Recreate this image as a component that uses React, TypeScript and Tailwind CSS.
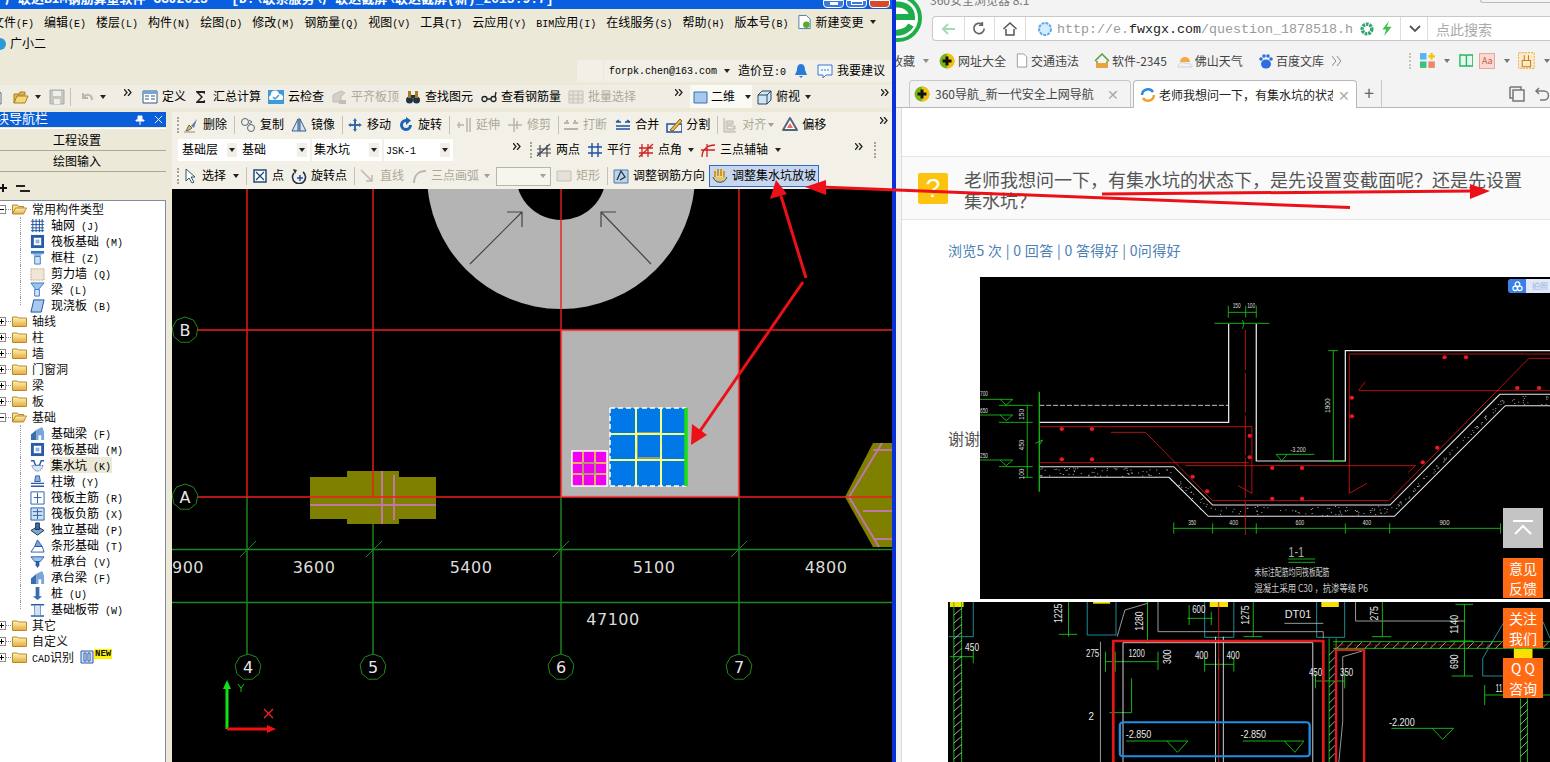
import React from 'react';

const Lat = ({ children }: { children: React.ReactNode }) => <span className="text-[10px]">{children}</span>;

const Caret = ({ cls = '' }: { cls?: string }) => (
  <svg viewBox="0 0 6 4" className={`w-[6px] h-[4px] shrink-0 ${cls}`}><path d="M0 0h6L3 4z" fill="#222" /></svg>
);
const More = ({ cls = '' }: { cls?: string }) => (
  <svg viewBox="0 0 8 7" className={`w-[8px] h-[7px] shrink-0 ${cls}`}><path d="M0 0l3 3.5L0 7M4 0l3 3.5L4 7" fill="none" stroke="#222" strokeWidth="1.3" /></svg>
);
const Sep = ({ cls = '' }: { cls?: string }) => <div className={`w-px h-[18px] bg-[#c5c2b8] shrink-0 ${cls}`} />;
const Grip = ({ cls = '' }: { cls?: string }) => <div className={`w-[2px] h-[16px] border-l-2 border-dotted border-[#a8a598] shrink-0 ${cls}`} />;

const icons: Record<string, React.ReactNode> = {
  file: <path d="M3 1h7l3 3v11H3z" fill="#fff" stroke="#667" />,
  open: <><path d="M1 5h5l1-2h5v3H5L1 14z" fill="#e9b949" stroke="#a97f1d" /><path d="M4 7h11l-3 7H1z" fill="#f6d77c" stroke="#a97f1d" /></>,
  save: <><path d="M1 1h14v14H1z" fill="#c9c7bd" stroke="#aaa" /><path d="M4 2h8v5H4zM5 10h6v5H5z" fill="#eee" /></>,
  undo: <path d="M4 4v5h5M4 9c3-5 9-4 9 2" fill="none" stroke="#b9b7ad" strokeWidth="2" />,
  def: <><path d="M1 2h14v12H1z" fill="#fff" stroke="#31568a" /><path d="M1 2h14v3H1z" fill="#7ba2d4" /><path d="M3 7h4M3 10h4M9 7h4M9 10h4" stroke="#31568a" /></>,
  sum: <path d="M3 2h9v3l-2-1H6l4 4-4 4h4l2-1v3H3v-1l5-5-5-5z" fill="#222" />,
  cloud: <><path d="M0 1h16v14H0z" fill="#3e9ad8" /><path d="M2 11a3 3 0 0 1 1-5 4 4 0 0 1 8-1 3.500 3.500 0 0 1 3 6z" fill="#fff" /><path d="M5 8l2 2 4-4" fill="none" stroke="#3e9ad8" strokeWidth="1.500" /></>,
  level: <><path d="M2 13V6l8-4 4 2-4 3v6z" fill="#d3d1c7" stroke="#bbb" /><path d="M8 11h7v4H8z" fill="#c2c0b6" /></>,
  find: <><circle cx="4.500" cy="11" r="3.500" fill="#234" /><circle cx="11.500" cy="11" r="3.500" fill="#234" /><path d="M3 2h3v7H3zM10 2h3v7h-3z" fill="#a97f1d" /><path d="M6 6h4v3H6z" fill="#234" /></>,
  glasses: <path d="M1 10a2.500 2.500 0 1 0 5 0 2.500 2.500 0 1 0-5 0zM10 10a2.500 2.500 0 1 0 5 0 2.500 2.500 0 1 0-5 0zM6 10h4M14 8l1-5" fill="none" stroke="#222" strokeWidth="1.300" />,
  batch: <path d="M1 2h14v12H1zM1 6h14M1 10h14M5 2v12M10 2v12" fill="#e6e4da" stroke="#c4c2b8" />,
  two: <path d="M1 3h13v11H1z" fill="#a8c8ef" stroke="#3c6fb0" />,
  cube: <><path d="M2 6l4-4h9v9l-4 4H2z" fill="#cfe6f5" stroke="#345" /><path d="M2 6h9v9M11 6l4-4" fill="none" stroke="#345" /></>,
  del: <><path d="M3 14l3-6 3 3-3 2z" fill="#e9b949" stroke="#666" /><path d="M8 9l6-7-3 9z" fill="#6a7ea8" /><path d="M1 15h11" stroke="#888" /></>,
  copy: <><circle cx="5" cy="5" r="3.500" fill="none" stroke="#567" /><circle cx="11" cy="11" r="3.500" fill="none" stroke="#567" /><path d="M9 3l3 2-3 2" fill="none" stroke="#567" /></>,
  mirror: <path d="M7 2v12H1zM9 2v12h6zM8 1v14" fill="#d8e3ef" stroke="#345f8f" />,
  move: <path d="M8 1l2 3H9v3h3V6l3 2-3 2V9H9v3h1l-2 3-2-3h1V9H4v1L1 8l3-2v1h3V4H6z" fill="#356aa8" />,
  rotate: <path d="M8 2a6 6 0 1 0 6 6h-3a3 3 0 1 1-3-3v3l5-4.500L8 0z" fill="#1d63b5" />,
  extend: <path d="M1 8h7M3 5v6M11 1v14M14 1v14" fill="none" stroke="#b8b6ac" strokeWidth="1.500" />,
  trim: <path d="M1 8h14M7 1v14M10 4v8" fill="none" stroke="#b8b6ac" strokeWidth="1.500" />,
  brk: <path d="M1 6h5M10 6h5M1 12h14M4 3v3M12 3v3" fill="none" stroke="#b8b6ac" strokeWidth="2" />,
  merge: <path d="M1 5h5M1 5l3-2M15 5h-5M15 5l-3-2M1 12h14M1 9h14" fill="none" stroke="#1d4fa5" strokeWidth="1.500" />,
  split: <><path d="M1 7h15v8H1z" fill="none" stroke="#1d4fa5" strokeWidth="1.500" /><path d="M4 13L14 2l2 2L7 14z" fill="#e9b949" stroke="#8a5f1d" /></>,
  align: <path d="M2 1v14h12M5 4h6v3H5zM5 9h8v3H5z" fill="#dedcd2" stroke="#b8b6ac" />,
  offset: <><path d="M8 1l7 12H1z" fill="#fff" stroke="#567" strokeWidth="2" strokeLinejoin="round" /><path d="M8 6l3 5H5z" fill="#e66" /></>,
  twopt: <path d="M1 14L14 2M4 3v12M11 3v12M1 7h14M1 11h14" fill="none" stroke="#445" strokeWidth="1.200" />,
  para: <path d="M5 1v14M11 1v14M1 5h14M1 11h14" fill="none" stroke="#1d4fa5" strokeWidth="1.400" />,
  angle: <path d="M1 15L15 2M4 2v13M10 2v13M1 6h14M1 11h14" fill="none" stroke="#c22" strokeWidth="1.300" />,
  arcaxis: <path d="M2 15C2 7 8 3 15 3M1 8h14M7 2v13" fill="none" stroke="#c22" strokeWidth="1.300" />,
  select: <path d="M4 1v12l3-3 3 5 2-1-3-5h4z" fill="#fff" stroke="#356" />,
  point: <><path d="M2 2h12v12H2z" fill="#fff" stroke="#234a7a" strokeWidth="1.500" /><path d="M4 4l8 8M12 4l-8 8" stroke="#234a7a" strokeWidth="1.300" /></>,
  rotpt: <><path d="M3 5a6.500 6.500 0 1 0 9-1" fill="none" stroke="#234" strokeWidth="1.600" /><path d="M2 1l4 1-2 4z" fill="#234" /><path d="M9 7v6M6 10h6" stroke="#1d4fa5" strokeWidth="1.500" /></>,
  line: <path d="M1 2l11 11M12 7v6H6" fill="none" stroke="#bbb9af" strokeWidth="1.500" />,
  arc: <path d="M3 15C3 7 8 3 15 3" fill="none" stroke="#bbb9af" strokeWidth="2" />,
  rect: <path d="M1 3h14v10H1z" fill="#e3e1d8" stroke="#c4c2b8" />,
  adj: <><path d="M1 2h14v13H1z" fill="#bcd3ea" stroke="#4a78a8" /><path d="M4 12L8 3l4 6-5 3" fill="none" stroke="#234" strokeWidth="1.300" /></>,
  pit: <><path d="M3 9V3M6 8V1M9 8V1M12 9V3" stroke="#d49a17" strokeWidth="2" /><path d="M1 9c2 7 12 7 14 0" fill="#e8c65a" stroke="#1d4fa5" /></>,
  globe: <circle cx="8" cy="8" r="6" fill="#d4ecff" stroke="#5ea9e6" strokeWidth="2" strokeDasharray="3 1" />,
};

const Ico = ({ name, cls = 'w-4 h-4' }: { name: string; cls?: string }) => (
  <svg viewBox="0 0 16 16" className={`${cls} shrink-0`}>{icons[name]}</svg>
);

const Tool = ({ icon, label, off, cls = '' }: { icon: string; label: string; off?: boolean; cls?: string }) => (
  <div className={`flex items-center gap-1 shrink-0 ${off ? 'text-[#aca899]' : ''} ${cls}`}>
    <Ico name={icon} />
    <span className="relative top-px">{label}</span>
  </div>
);

const Combo = ({ label, cls }: { label: React.ReactNode; cls: string }) => (
  <div className={`flex items-center justify-between h-[22px] bg-white pr-[3px] shrink-0 ${cls}`}>
    <span className="relative top-px">{label}</span>
    <div className="w-[10px] h-[14px] bg-[#f1efe6] flex items-center justify-center"><Caret /></div>
  </div>
);

const menus: [React.ReactNode, string][] = [
  ['文件', '(F)'], ['编辑', '(E)'], ['楼层', '(L)'], ['构件', '(N)'], ['绘图', '(D)'], ['修改', '(M)'], ['钢筋量', '(Q)'],
  ['视图', '(V)'], ['工具', '(T)'], ['云应用', '(Y)'], [<><Lat>BIM</Lat>应用</>, '(I)'], ['在线服务', '(S)'], ['帮助', '(H)'], ['版本号', '(B)'],
];

const Folder = ({ open }: { open?: boolean }) => (
  <svg viewBox="0 0 15 12" className="w-[15px] h-[12px] shrink-0 ml-[1px]">
    <defs>
      <linearGradient id="fld" x1="0" y1="0" x2="0" y2="1"><stop offset="0" stopColor="#fff3b8" /><stop offset="1" stopColor="#e2ad3f" /></linearGradient>
    </defs>
    {open ? (
      <>
        <path d="M.5 11V2h5l1 1.500h5V5" fill="#f3dca0" stroke="#b78a2c" />
        <path d="M.5 11l3-6h11l-3 6z" fill="url(#fld)" stroke="#b78a2c" />
      </>
    ) : (
      <path d="M.5 2h5l1 1h8v8.500H.5z" fill="url(#fld)" stroke="#b78a2c" />
    )}
  </svg>
);

const Top = ({ label, open, extra }: { label: React.ReactNode; open?: boolean; extra?: React.ReactNode }) => (
  <div className="flex items-center h-4">
    <div className="w-[9px] h-[9px] -ml-[3px] border border-[#8a8a8a] bg-white flex items-center justify-center shrink-0 relative">
      <div className="w-[5px] h-px bg-black" />
      {!open && <div className="absolute w-px h-[5px] bg-black" />}
    </div>
    <div className="w-[5px] border-b border-dotted border-[#888]" />
    <Folder open={open} />
    <span className="ml-[5px] leading-4 text-[#111] relative top-[2px]">{label}</span>
    {extra}
  </div>
);

const tIcons: Record<string, React.ReactNode> = {
  grid: <path d="M3 1v14M6.500 1v14M10 1v14M13 1v14M1 3.500h14M1 7h14M1 10.500h14M1 13.500h14" stroke="#1f4f9a" />,
  raft: <><path d="M1 1h14v14H1z" fill="#2a5ba8" /><path d="M3.500 3.500h9v9h-9z" fill="#fff" stroke="#2a5ba8" /><path d="M6 6h4v4H6z" fill="#8fb1de" /></>,
  col: <><path d="M1 1h14v3H1z" fill="#3a77c4" /><path d="M3 4h10l-2 3H5z" fill="#8fb8e6" /><path d="M5 7h6v8H5z" fill="#cfe1f5" stroke="#3a77c4" /></>,
  wall: <path d="M1 3h14v12H1z" fill="#f1e6d6" stroke="#c9a37e" strokeDasharray="2 1" />,
  beam: <><path d="M1 1h14L9 8H6z" fill="#9cc4ec" stroke="#3a77c4" /><path d="M5 8h5v7H5z" fill="#d6e6f6" stroke="#3a77c4" /></>,
  slab: <><path d="M4 2h11l-3 13H1z" fill="#a8c8ef" stroke="#1f4f9a" /></>,
  fb: <><path d="M1 15V9l6-5v11z" fill="#3a6db0" /><path d="M7 4l6-3 2 5v9H7z" fill="#7aa5d8" /><path d="M9 15v-5h3v5z" fill="#fff" /></>,
  pit: <><path d="M1 3l3 0 2 5h4l2-5 3 0" fill="none" stroke="#2a5ba8" strokeWidth="1.500" /><path d="M2 8c2 8 10 8 12 0z" fill="#d8e4f0" stroke="#2a5ba8" strokeDasharray="1 1" /></>,
  cap: <><path d="M6 2h4l1 6H5z" fill="#8fb1de" stroke="#2a5ba8" /><path d="M1 10h14M1 13h14" stroke="#2a5ba8" strokeWidth="1.500" /></>,
  rebar: <><path d="M1 2h14v13H1z" fill="#fff" stroke="#2a5ba8" /><path d="M8 3v11M4 8h8" stroke="#2a5ba8" /></>,
  rebar2: <><path d="M1 2h14v13H1z" fill="#cfe1f5" stroke="#2a5ba8" /><path d="M8 3v11M3 6h10M3 10h10" stroke="#2a5ba8" /></>,
  ind: <><path d="M1 9l7-4 7 4-7 5z" fill="#7aa5d8" stroke="#234" /><path d="M6 1h4v7H6z" fill="#3a6db0" stroke="#234" /></>,
  strip: <><path d="M1 15l4-6h8l2 6z" fill="#fff" stroke="#2a5ba8" /><path d="M5 9l3-7 5 7z" fill="#7aa5d8" stroke="#2a5ba8" /></>,
  pile: <><path d="M1 3h14L11 8H5z" fill="#9cc4ec" stroke="#2a5ba8" /><path d="M6 8h4v4l-2 3-2-3z" fill="#2a5ba8" /></>,
  pile2: <><path d="M6 1h4v10h3l-5 4-5-4h3z" fill="#3a6db0" /></>,
  band: <><path d="M1 3h14M1 15h14" stroke="#2a5ba8" strokeWidth="1.500" /><path d="M5 4v10M11 4v10" stroke="#2a5ba8" /><path d="M5 5h6v9H5z" fill="#cfe1f5" /></>,
};

const Child = ({ icon, label, last, selected }: { icon: string; label: React.ReactNode; last?: boolean; selected?: boolean }) => (
  <div className="flex items-center h-4">
    <div className="w-[11px] h-4 ml-[20px] shrink-0">
      <div className={`${last ? 'h-2' : 'h-4'} w-px border-l border-dotted border-[#999]`} />
    </div>
    <svg viewBox="0 0 16 16" className="w-[15px] h-[15px] shrink-0 -ml-[1px] mt-px bg-white">{tIcons[icon]}</svg>
    <span className={`ml-[5px] leading-4 h-4 px-px ${selected ? 'bg-[#ece9d8]' : ''}`}><span className="relative top-[2px]">{label}</span></span>
  </div>
);

const sub1: [string, string, string][] = [
  ['grid', '轴网', '(J)'], ['raft', '筏板基础', '(M)'], ['col', '框柱', '(Z)'], ['wall', '剪力墙', '(Q)'], ['beam', '梁', '(L)'], ['slab', '现浇板', '(B)'],
];
const sub2: [string, string, string][] = [
  ['fb', '基础梁', '(F)'], ['raft', '筏板基础', '(M)'], ['pit', '集水坑', '(K)'], ['cap', '柱墩', '(Y)'], ['rebar', '筏板主筋', '(R)'], ['rebar2', '筏板负筋', '(X)'],
  ['ind', '独立基础', '(P)'], ['strip', '条形基础', '(T)'], ['pile', '桩承台', '(V)'], ['fb', '承台梁', '(F)'], ['pile2', '桩', '(U)'], ['band', '基础板带', '(W)'],
];

const Octagon = ({ x, y, t }: { x: number; y: number; t: string }) => {
  const pts = Array.from({ length: 9 }, (_, i) => {
    const a = (i * 2 * Math.PI) / 9 - Math.PI / 2;
    return `${x + 13 * Math.cos(a)},${y + 13 * Math.sin(a)}`;
  }).join(' ');
  return (
    <>
      <polygon points={pts} fill="#000" stroke="#1e8a1e" strokeWidth="1" />
      <text x={x} y={y + 6} textAnchor="middle" fill="#e6e6e6" fontSize="16" fontFamily="'DejaVu Sans',sans-serif">{t}</text>
    </>
  );
};

const Dim = ({ x, y, t }: { x: number; y: number; t: string }) => (
  <text x={x} y={y} textAnchor="middle" fill="#dcdcdc" fontSize="16" letterSpacing="0.5" fontFamily="'DejaVu Sans',sans-serif">{t}</text>
);

const Canvas = () => (
  <svg viewBox="172 189 720 573" className="w-[720px] h-[573px] block bg-black">
    <circle cx="561" cy="175" r="134" fill="#b4b4b4" />
    <circle cx="561" cy="175" r="45" fill="#000" />
    <path d="M470 264l52-52M507 212h15v15M651 264l-50-52M601 227v-15h15" fill="none" stroke="#444" strokeWidth="1.200" />

    {/* grid lines */}
    <path d="M247 497V655M373 497V655M561 497V655M739 497V655" stroke="#1e8a1e" strokeWidth="1.400" />
    <path d="M172 549.500H892M172 602.500H892" stroke="#1e8a1e" strokeWidth="1.400" />
    <path d="M240 557l16-16M366 557l16-16M553 557l16-16M731 557l16-16" stroke="#1e8a1e" />

    {/* isolated footings */}
    <path d="M310 477h37v-6h52v6h37v42h-37v5h-52v-5h-37z" fill="#808000" />
    <path d="M310 505h126M382 471v53M394 475v45" stroke="#bd78a6" strokeWidth="2" />
    <polygon points="845,497 873,443 892,443 892,547 873,547" fill="#808000" />
    <path d="M849 497l33-54M849 497l30 50M873 450h19M863 511h29M875 539h17" stroke="#bd78a6" strokeWidth="2" fill="none" />

    <path d="M247 189V497M373 189V497M561 189V497M739 189V497M172 330H892M172 497H892" stroke="#f01c1c" strokeWidth="1.400" />

    {/* pit slab */}
    <rect x="561.500" y="330.500" width="177" height="166" fill="#b4b4b4" stroke="#f04a4a" strokeWidth="1.300" />
    <rect x="610" y="408" width="77" height="78" fill="#0078e8" />
    <path d="M637 433h24v25h-24z" fill="none" stroke="#8d9a86" strokeWidth="2" />
    <path d="M636 408v78M661 408v78M610 434h76M610 460h76" stroke="#f4ff80" strokeWidth="2" />
    <path d="M610 408h76M610 486h76M610 408v78" stroke="#fff" strokeWidth="1.500" strokeDasharray="5 3" fill="none" />
    <path d="M686 408v78" stroke="#14e014" strokeWidth="3.500" />
    <rect x="572" y="451" width="35" height="35" fill="#f000f0" stroke="#fff" strokeWidth="1.500" />
    <path d="M583 451v35M595 451v35M572 463h35M572 474h35" stroke="#f0e83c" strokeWidth="1.500" />
    <path d="M583 463h12v11h-12z" fill="none" stroke="#9b8f7b" strokeWidth="1.500" />

    <Octagon x={185} y={330} t="B" />
    <Octagon x={185} y={497} t="A" />
    <Octagon x={248} y={667} t="4" />
    <Octagon x={373} y={667} t="5" />
    <Octagon x={561} y={667} t="6" />
    <Octagon x={739} y={667} t="7" />

    <Dim x={188} y={573} t="900" />
    <Dim x={314} y={573} t="3600" />
    <Dim x={471} y={573} t="5400" />
    <Dim x={654} y={573} t="5100" />
    <Dim x={826} y={573} t="4800" />
    <Dim x={613} y={625} t="47100" />

    {/* axes */}
    <path d="M227 729V688" stroke="#14e014" strokeWidth="3" />
    <path d="M227 680l-4 9h8z" fill="#14e014" />
    <path d="M227 729H268" stroke="#f01010" strokeWidth="3" />
    <path d="M276 729l-9-4v8z" fill="#f01010" />
    <path d="M238 684l3 4 3-4M241 688v4" stroke="#14c014" fill="none" />
    <path d="M264 709l9 9M273 709l-9 9" stroke="#ff2020" strokeWidth="1.200" />
  </svg>
);

/* pseudo random speckles for the poured slab */
const speck: [number, number][] = [];
{
  let s = 7;
  const rnd = () => ((s = (s * 16807) % 2147483647) / 2147483647);
  for (let i = 0; i < 240; i++) {
    const t = rnd();
    const d = rnd();
    if (t < 0.3) speck.push([165 + t / 0.3 * 360, 578 + d * 26]);
    else if (t < 0.42) { const k = (t - 0.3) / 0.12; speck.push([530 + k * 100 - d * 12, 580 + k * 110 + d * 30]); }
    else if (t < 0.72) speck.push([632 + (t - 0.42) / 0.3 * 500, 693 + d * 28]);
    else if (t < 0.92) { const k = (t - 0.72) / 0.2; speck.push([1132 + k * 300 + d * 12, 720 - k * 330 - d * 28]); }
    else speck.push([1435 + (t - 0.92) / 0.08 * 133, 362 + d * 26]);
  }
}

const Section = () => (
  <svg viewBox="0 6 1568 966" preserveAspectRatio="none" className="block w-[570px] h-[322px] bg-black shrink-0" fontFamily="'Liberation Sans',sans-serif">
    <path d="M684 147V442H163M760 147V558H1005V227H1568" fill="none" stroke="#e6e6e6" strokeWidth="3.500" />
    <path d="M163 391H684" stroke="#ddd" strokeWidth="2.500" strokeDasharray="14 5" />
    <path d="M163 575H533L640 690H1128L1430 358H1568M163 607H520L628 724H1140L1445 392H1568" fill="none" stroke="#e6e6e6" strokeWidth="3" />
    {speck.map(([x, y], i) => <rect key={i} x={x} y={y} width="3" height="2" fill="#e8e8e8" />)}

    <g stroke="#16c416" strokeWidth="2.500" fill="none">
      <path d="M163 350V650" strokeWidth="3.500" />
      <path d="M0 373H90L72 390 55 373M0 420H90L72 437 55 420M0 555H90L72 572 55 555" />
      <path d="M52 391H145M52 442H145M52 575H145M120 607H145M130 391V607" />
      <path d="M683 112H760M683 92V128M731 92V128M760 92V128M645 145H796M722 135l4 12-4 14" />
      <path d="M972 227V558M958 227H985M958 558H1005" />
      <path d="M815 538H920M815 538L830 558 845 538" />
      <path d="M533 760H1432M533 742V776M640 745V776M760 745V776M1005 745V776M1127 745V776M1432 745V776" />
      <path d="M848 852H922M848 862H922" />
      <path d="M152 505l20-10-8 14" />
    </g>

    <g stroke="#cf1414" strokeWidth="2.500" fill="none">
      <path d="M163 455H748M163 563H740M565 572H1198M748 455V655M710 632L748 655" />
      <path d="M730 165V780" strokeDasharray="120 8" />
      <path d="M360 472H455L640 677H1125L1510 250H1568M1016 237H1568M1016 237V655M1042 347H1568M1016 655L1065 625M1042 345L1060 320M1178 592L1198 572" />
    </g>
    {[[225,462],[308,462],[225,553],[308,553],[742,482],[742,547],[585,605],[625,649],[804,579],[886,579],[804,671],[886,671],[1218,562],[1258,518],[1023,368],[1023,424],[1278,247],[1337,247],[1478,339],[1538,339]].map(([x, y]) => (
      <ellipse key={`${x}-${y}`} cx={x} cy={y} rx="6" ry="6" fill="#f01824" />
    ))}

    <g fill="#ddd" fontSize="20">
      <text x="706" y="98" textAnchor="middle" textLength="22" lengthAdjust="spacingAndGlyphs">150</text>
      <text x="746" y="98" textAnchor="middle" textLength="22" lengthAdjust="spacingAndGlyphs">100</text>
      <text x="875" y="532" textAnchor="middle" textLength="42" lengthAdjust="spacingAndGlyphs">-3.200</text>
      <text x="0" y="364" textLength="22" lengthAdjust="spacingAndGlyphs">700</text>
      <text x="0" y="415" textLength="22" lengthAdjust="spacingAndGlyphs">650</text>
      <text x="0" y="548" textLength="22" lengthAdjust="spacingAndGlyphs">250</text>
      <text transform="translate(121 418) rotate(-90)" textAnchor="middle">150</text>
      <text transform="translate(120 510) rotate(-90)" textAnchor="middle">450</text>
      <text transform="translate(120 597) rotate(-90)" textAnchor="middle">100</text>
      <text transform="translate(964 392) rotate(-90)" textAnchor="middle">1900</text>
      <text x="584" y="750" textAnchor="middle" textLength="22" lengthAdjust="spacingAndGlyphs">350</text>
      <text x="698" y="750" textAnchor="middle" textLength="24" lengthAdjust="spacingAndGlyphs">400</text>
      <text x="880" y="750" textAnchor="middle" textLength="24" lengthAdjust="spacingAndGlyphs">600</text>
      <text x="1064" y="750" textAnchor="middle" textLength="24" lengthAdjust="spacingAndGlyphs">400</text>
      <text x="1278" y="750" textAnchor="middle" textLength="28" lengthAdjust="spacingAndGlyphs">900</text>
      <text x="870" y="846" textAnchor="middle" fontSize="44" textLength="44" lengthAdjust="spacingAndGlyphs" fill="#aaa">1-1</text>
      <text x="755" y="902" fontSize="30" textLength="206" lengthAdjust="spacingAndGlyphs" fontFamily="'Noto Sans CJK SC',sans-serif" fill="#ccc">未标注配筋均同筏板配筋</text>
      <text x="755" y="950" fontSize="30" textLength="312" lengthAdjust="spacingAndGlyphs" fontFamily="'Noto Sans CJK SC',sans-serif" fill="#ccc">混凝土采用 C30 ，抗渗等级 P6</text>
    </g>
  </svg>
);

const hatch = (x: number, y0: number, y1: number, w: number) =>
  Array.from({ length: Math.floor((y1 - y0) / 24) }, (_, i) => `M${x} ${y0 + i * 24 + 20}l${w} -20`).join('');

const Plan = () => (
  <svg viewBox="20 21 1548 480" preserveAspectRatio="none" className="block w-[602px] h-[160px] bg-black" fontFamily="'Liberation Sans',sans-serif">
    <g fill="#f8e000">
      <rect x="25" y="21" width="35" height="15" /><rect x="393" y="21" width="44" height="5" /><rect x="693" y="21" width="47" height="15" /><rect x="980" y="21" width="45" height="15" /><rect x="1475" y="160" width="48" height="30" />
    </g>
    <path d="M22 125H85V21M378 21V120H452V21M680 21V127H755V21M968 21V127H1040V21M1395 243H1500M1395 243V190L1450 80M1550 80L1568 130" fill="none" stroke="#1f9aa8" strokeWidth="2.500" />
    <path d="M560 21V110H985V130M1068 21V78H1350M885 85H985M412 140V501M455 125L475 45 533 25M1035 185L1085 168M1035 185V380L1025 501" fill="none" stroke="#aaa" strokeWidth="2.500" />

    <g stroke="#16c416" strokeWidth="2.500" fill="none">
      <path d="M35 21V501M55 21V501M1000 130V501M1018 130V501M1492 310V501M1510 310V501" />
      <path d="M330 21V125M305 118H352M533 21V145M640 30V90M635 70H700M697 50V90M805 21V125M780 125H828M1137 21V125M1110 125H1160" />
      <path d="M25 185H85M85 160V205M425 200H560M425 170V230M450 170V230M560 170V225M680 208H755M680 185V230M716 190V225M755 185V230M965 258H1040M965 235V280M1040 235V280" />
      <path d="M492 250V353H435M1348 28V243M1325 28H1370M1310 138H1370M1315 243H1370M1400 270V330M1400 300H1568" />
      <path d="M1010 140H1568M1010 160H1568" />
      <path d="M478 438H637L610 472 583 438M778 438H935L912 472 885 438M1160 400H1320L1292 433 1265 400" />
    </g>
    <path d={hatch(35, 40, 500, 20) + hatch(1000, 160, 500, 18) + hatch(1492, 320, 500, 18)} stroke="#e8e8e8" strokeWidth="2" />
    <path d={Array.from({ length: 24 }, (_, i) => `M${1020 + i * 24} 160l16 -18`).join('')} stroke="#e8e8e8" strokeWidth="2" />

    <path d="M716 21V501" stroke="#d01414" strokeWidth="2.500" />
    <path d="M1010 150H1568" stroke="#d01414" strokeWidth="2" strokeDasharray="12 6" />
    <path d="M470 143V501M958 143V501M470 143H958M708 125V501M728 125V501" fill="none" stroke="#e8e8e8" strokeWidth="2.500" />
    <path d="M445 501V138H985V501" fill="none" stroke="#e01a1a" strokeWidth="7" />
    <path d="M1018 501V165H1090V501" fill="none" stroke="#e01a1a" strokeWidth="6" />
    <rect x="462" y="382" width="488" height="102" rx="8" fill="none" stroke="#1f8fe5" strokeWidth="6" />

    <g fill="#e8e8e8" fontSize="34">
      <text x="920" y="70" textAnchor="middle" textLength="68" lengthAdjust="spacingAndGlyphs">DT01</text>
      <text x="82" y="168" textAnchor="middle" textLength="36" lengthAdjust="spacingAndGlyphs">450</text>
      <text x="392" y="186" textAnchor="middle" textLength="34" lengthAdjust="spacingAndGlyphs">275</text>
      <text x="505" y="186" textAnchor="middle" textLength="42" lengthAdjust="spacingAndGlyphs">1200</text>
      <text x="672" y="192" textAnchor="middle" textLength="34" lengthAdjust="spacingAndGlyphs">400</text>
      <text x="753" y="192" textAnchor="middle" textLength="34" lengthAdjust="spacingAndGlyphs">400</text>
      <text x="665" y="55" textAnchor="middle" textLength="34" lengthAdjust="spacingAndGlyphs">600</text>
      <text x="965" y="243" textAnchor="middle" textLength="34" lengthAdjust="spacingAndGlyphs">450</text>
      <text x="1045" y="243" textAnchor="middle" textLength="34" lengthAdjust="spacingAndGlyphs">350</text>
      <text x="388" y="375" textAnchor="middle" textLength="14" lengthAdjust="spacingAndGlyphs">2</text>
      <text x="510" y="430" textAnchor="middle" textLength="66" lengthAdjust="spacingAndGlyphs">-2.850</text>
      <text x="805" y="430" textAnchor="middle" textLength="66" lengthAdjust="spacingAndGlyphs">-2.850</text>
      <text x="1187" y="392" textAnchor="middle" textLength="66" lengthAdjust="spacingAndGlyphs">-2.200</text>
      <text x="1437" y="290" textAnchor="middle" textLength="18" lengthAdjust="spacingAndGlyphs">11</text>
      <g fontSize="26">
        <text transform="translate(314 55) rotate(-90)" textAnchor="middle">1225</text>
        <text transform="translate(522 78) rotate(-90)" textAnchor="middle">1280</text>
        <text transform="translate(594 185) rotate(-90)" textAnchor="middle">300</text>
        <text transform="translate(793 60) rotate(-90)" textAnchor="middle">1275</text>
        <text transform="translate(1126 55) rotate(-90)" textAnchor="middle">275</text>
        <text transform="translate(1332 88) rotate(-90)" textAnchor="middle">1140</text>
        <text transform="translate(1332 200) rotate(-90)" textAnchor="middle">690</text>
      </g>
    </g>
  </svg>
);

const Orange = ({ a, b, cls = '' }: { a: string; b: string; cls?: string }) => (
  <div className={`w-10 h-10 bg-[#ff6a13] text-white text-sm leading-5 text-center ${cls}`}>
    <div>{a}</div>
    <div>{b}</div>
  </div>
);

const Ball = () => (
  <svg viewBox="0 0 16 16" className="w-4 h-4 shrink-0">
    <circle cx="8" cy="8" r="7.500" fill="#7cb518" />
    <path d="M8 .5a7.500 7.500 0 0 1 0 15z" fill="#f2c210" />
    <path d="M6.500 3.500h3v3h3v3h-3v3h-3v-3h-3v-3h3z" fill="#111" />
  </svg>
);

export default function App() {
  return (
    <div className="relative w-[1550px] h-[762px] overflow-hidden flex bg-white text-xs text-black font-['Liberation_Mono','Noto_Sans_CJK_SC',monospace] whitespace-nowrap">
      {/* left: the modelling program */}
      <div className="w-[892px] h-[762px] shrink-0 bg-[#ece9d8] flex flex-col overflow-hidden">
        <div className="h-[9px] shrink-0 bg-[#0a5fe0] flex justify-between overflow-hidden">
          <div className="-mt-[9px] ml-[5px] h-[18px] leading-[18px] text-white font-bold text-[13px]">广联达BIM钢筋算量软件 GGJ2013 - [D:\联系服务\广联达截屏\联达截屏(新)_2015.9.7]</div>
          <div className="flex gap-[2px] mr-[2px] shrink-0 bg-[#0a5fe0] pl-1">
            <div className="w-[21px] h-[8px] rounded-b-sm border border-white bg-[#3b78e0]"><div className="w-2 h-[3px] mx-auto mt-px bg-white" /></div>
            <div className="w-[21px] h-[8px] rounded-b-sm border border-white bg-[#3b78e0]"><div className="w-3 h-[4px] mx-auto border border-white" /></div>
            <div className="w-[21px] h-[8px] rounded-b-sm border border-white bg-[#d8482a]" />
          </div>
        </div>

        <div className="h-[26px] shrink-0 flex items-center gap-[10px] -ml-[8px]">
          {menus.map(([a, b], i) => (
            <div key={i} className="shrink-0 relative top-[2px]">{a}<Lat>{b}</Lat></div>
          ))}
          <svg viewBox="0 0 16 16" className="w-[15px] h-4 shrink-0 -ml-[1px]"><path d="M2 1h8l4 4v10H2z" fill="#fff" stroke="#4a78a8" /><circle cx="10" cy="11" r="3.500" fill="#58a82c" /></svg>
          <span className="-ml-[7px] relative top-[2px]">新建变更</span>
          <Caret cls="-ml-[3px]" />
        </div>

        <div className="h-[18px] shrink-0 flex items-center">
          <div className="w-[6px] h-[12px] rounded-r-full bg-[#2a9ad8]" />
          <span className="ml-[4px] relative top-px">广小二</span>
        </div>

        <div className="h-[22px] shrink-0 mt-[7px] flex items-center">
          <div className="w-[26px] h-[22px] ml-[577px] bg-[#f1efe6]" />
          <div className="flex-1 h-[22px] ml-px bg-[#f1efe6] flex items-center">
            <span className="ml-[5px] text-[10px] relative top-px">forpk.chen@163.com</span>
            <Caret cls="ml-[7px]" />
            <span className="ml-[8px] relative top-px">造价豆<Lat>:0</Lat></span>
            <svg viewBox="0 0 12 14" className="w-[12px] h-[14px] ml-[9px]"><path d="M6 0c3 0 4 3 4 6l2 5H0l2-5c0-3 1-6 4-6zM4 12h4l-2 2z" fill="#2a7ad8" /></svg>
            <svg viewBox="0 0 16 16" className="w-4 h-4 ml-[10px]"><path d="M1 2h14v10H9l-3 3v-3H1z" fill="#f4f9ff" stroke="#3a78c8" /><path d="M4 7h2M7 7h2M10 7h2" stroke="#3a78c8" /></svg>
            <span className="ml-1 relative top-px">我要建议</span>
          </div>
        </div>

        {/* main toolbar */}
        <div className="h-[23px] shrink-0 mt-[3px] flex items-center bg-[#f0eee4] -ml-[12px]">
          <Ico name="file" />
          <Ico name="open" cls="w-4 h-4 ml-[9px]" />
          <Caret cls="ml-[6px]" />
          <Ico name="save" cls="w-4 h-4 ml-[8px]" />
          <Sep cls="ml-[5px]" />
          <Ico name="undo" cls="w-4 h-4 ml-[8px]" />
          <Caret cls="ml-[5px]" />
          <More cls="ml-[18px] -mt-2" />
          <Tool icon="def" label="定义" cls="ml-[10px]" />
          <Tool icon="sum" label="汇总计算" cls="ml-[7px]" />
          <Tool icon="cloud" label="云检查" cls="ml-[7px]" />
          <Tool icon="level" label="平齐板顶" off cls="ml-[7px]" />
          <Tool icon="find" label="查找图元" cls="ml-[6px]" />
          <Tool icon="glasses" label="查看钢筋量" cls="ml-[8px]" />
          <Tool icon="batch" label="批量选择" off cls="ml-[7px]" />
          <More cls="ml-[39px] -mt-2" />
          <div className="flex items-center h-[23px] w-[62px] ml-[7px] pl-[3px] bg-[#fafaf5] shrink-0">
            <Ico name="two" />
            <span className="ml-[2px] relative top-px">二维</span>
          </div>
          <Caret cls="ml-[-7px]" />
          <Ico name="cube" cls="w-4 h-4 ml-[5px]" />
          <span className="ml-1 relative top-px">俯视</span>
          <Caret cls="ml-[5px]" />
          <More cls="ml-[70px] -mt-2" />
        </div>

        {/* panel + drawing */}
        <div className="mt-[4px] h-[650px] shrink-0 flex">
          <div className="w-[166px] h-[650px] shrink-0 flex flex-col overflow-hidden">
            <div className="h-[15px] shrink-0 bg-[#0a5ed8] text-white text-[13px] flex items-center -ml-[2px] relative">
              <span className="-ml-[2px]">块导航栏</span>
              <svg viewBox="0 0 10 10" className="w-[10px] h-[10px] absolute left-[137px]"><path d="M3 1h4v4h2v1H1V5h2zM5 6v4" stroke="#fff" fill="#fff" /></svg>
              <svg viewBox="0 0 10 10" className="w-[9px] h-[9px] absolute left-[156px]"><path d="M1 1l8 8M9 1l-8 8" stroke="#fff" /></svg>
            </div>
            <div className="h-[23px] mt-px shrink-0 pl-[53px] pt-[2px] leading-[22px] border-b border-[#aca899] border-t border-t-white">工程设置</div>
            <div className="h-[21px] shrink-0 pl-[53px] pt-[2px] leading-[20px] border-b border-[#aca899]">绘图输入</div>
            <div className="h-[28px] shrink-0 flex items-center pt-1">
              <svg viewBox="0 0 8 8" className="w-2 h-2 -ml-px"><path d="M3 0h2v3h3v2H5v3H3V5H0V3h3z" fill="#111" /></svg>
              <svg viewBox="0 0 16 8" className="w-4 h-2 ml-[8px]"><path d="M1 1h9v2H1zM5 6h10v2H5z" fill="#222" /></svg>
            </div>
            <div className="flex-1 bg-white border-t border-r border-[#7f8d9f] overflow-hidden">
              <Top label="常用构件类型" open />
              {sub1.map(([i, a, b], n) => <Child key={a} icon={i} label={<>{a}<Lat> {b}</Lat></>} last={n === sub1.length - 1} />)}
              {['轴线', '柱', '墙', '门窗洞', '梁', '板'].map(t => <Top key={t} label={t} />)}
              <Top label="基础" open />
              {sub2.map(([i, a, b], n) => <Child key={a + n} icon={i} selected={a === '集水坑'} label={<>{a}<Lat> {b}</Lat></>} last={n === sub2.length - 1} />)}
              <Top label="其它" />
              <Top label="自定义" />
              <Top
                label={<><Lat>CAD</Lat>识别</>}
                extra={
                  <div className="flex items-start ml-[6px] h-4">
                    <svg viewBox="0 0 14 14" className="w-[14px] h-[14px] mt-px"><path d="M1 1h12v12H1z" fill="#cfe1f5" stroke="#2a5ba8" /><path d="M4 3h2v8H4zM8 3h2v8H8z" fill="#fff" stroke="#2a5ba8" /></svg>
                    <span className="text-[9px] leading-[10px] font-bold text-[#111] bg-[#fff200] px-px">NEW</span>
                  </div>
                }
              />
            </div>
          </div>

          <div className="w-[6px] shrink-0" />

          <div className="w-[720px] shrink-0 flex flex-col">
            <div className="h-[25px] shrink-0 flex items-center bg-[#f3f1e7]">
              <Grip cls="ml-[5px]" />
              <Tool icon="del" label="删除" cls="ml-[4px]" />
              <Sep cls="ml-[7px]" />
              <Tool icon="copy" label="复制" cls="ml-[5px]" />
              <Tool icon="mirror" label="镜像" cls="ml-[7px]" />
              <Sep cls="ml-[7px]" />
              <Tool icon="move" label="移动" cls="ml-[4px]" />
              <Tool icon="rotate" label="旋转" cls="ml-[7px]" />
              <Sep cls="ml-[7px]" />
              <Tool icon="extend" label="延伸" off cls="ml-[6px]" />
              <Tool icon="trim" label="修剪" off cls="ml-[7px]" />
              <Sep cls="ml-[7px]" />
              <Tool icon="brk" label="打断" off cls="ml-[4px]" />
              <Tool icon="merge" label="合并" cls="ml-[8px]" />
              <Tool icon="split" label="分割" cls="ml-[7px]" />
              <Sep cls="ml-[7px]" />
              <Tool icon="align" label="对齐" off cls="ml-[4px]" />
              <Caret cls="ml-[2px] opacity-40" />
              <Tool icon="offset" label="偏移" cls="ml-[8px]" />
              <More cls="ml-[54px] -mt-2" />
            </div>
            <div className="h-[26px] shrink-0 flex items-center bg-[#f3f1e7]">
              <Combo label="基础层" cls="w-[62px] ml-[6px] pl-1" />
              <Combo label="基础" cls="w-[70px] pl-[2px]" />
              <Combo label="集水坑" cls="w-[70px] ml-[2px] pl-[2px]" />
              <Combo label={<Lat>JSK-1</Lat>} cls="w-[69px] ml-[2px] pl-[2px]" />
              <More cls="ml-[60px] -mt-2" />
              <Grip cls="ml-[9px]" />
              <Tool icon="twopt" label="两点" cls="ml-[4px]" />
              <Tool icon="para" label="平行" cls="ml-[7px]" />
              <Tool icon="angle" label="点角" cls="ml-[7px]" />
              <Caret cls="ml-[6px]" />
              <Tool icon="arcaxis" label="三点辅轴" cls="ml-[6px]" />
              <Caret cls="ml-[7px]" />
              <More cls="ml-[74px] -mt-2" />
              <Grip cls="ml-[11px]" />
            </div>
            <div className="h-[26px] shrink-0 flex items-center bg-[#f3f1e7]">
              <Grip cls="ml-[5px]" />
              <Tool icon="select" label="选择" cls="ml-[3px]" />
              <Caret cls="ml-[7px]" />
              <Sep cls="ml-[7px]" />
              <Tool icon="point" label="点" cls="ml-[5px]" />
              <Tool icon="rotpt" label="旋转点" cls="ml-[7px]" />
              <Sep cls="ml-[7px]" />
              <Tool icon="line" label="直线" off cls="ml-[5px]" />
              <Tool icon="arc" label="三点画弧" off cls="ml-[7px]" />
              <Caret cls="ml-[5px] opacity-40" />
              <div className="w-[55px] h-[19px] ml-[6px] bg-[#f6f5ee] border border-[#b8b6ac] flex items-center justify-end pr-1 shrink-0"><Caret cls="opacity-40" /></div>
              <Tool icon="rect" label="矩形" off cls="ml-[5px]" />
              <Sep cls="ml-[7px]" />
              <Tool icon="adj" label="调整钢筋方向" cls="ml-[5px]" />
              <div className="ml-[4px] h-[22px] w-[110px] pl-[2px] bg-[#c5d6ee] border border-[#316ac5] flex items-center gap-1 shrink-0">
                <Ico name="pit" />
                <span className="relative top-px">调整集水坑放坡</span>
              </div>
            </div>
            <Canvas />
          </div>
        </div>
      </div>

      <div className="w-[4px] shrink-0 bg-[#0831d9]" />

      {/* right: the browser with the question page */}
      <div className="relative flex-1 min-w-0 h-[762px] flex flex-col bg-[#f3f3f3] overflow-hidden font-['Noto_Sans_CJK_SC','Liberation_Sans',sans-serif]">
        <svg viewBox="0 0 52 50" className="absolute -left-[24px] -top-[7px] w-[52px] h-[50px]">
          <circle cx="26" cy="25" r="22" fill="#fff" stroke="#1dae4b" strokeWidth="4" />
          <path d="M10 24h30c0-17-30-17-30 2 0 16 22 18 29 6" fill="none" stroke="#1dae4b" strokeWidth="6" />
        </svg>

        <div className="h-[16px] shrink-0 overflow-hidden pl-[34px] text-[#777] leading-[0px] flex justify-between">
          <span>360安全浏览器 8.1</span>
          <div className="w-[90px] h-[3px] mr-[-20px] border-b border-l border-[#bbb] rounded-bl" />
        </div>

        <div className="h-[25px] shrink-0 ml-[36px] bg-white border border-r-0 border-[#c8c8c8] rounded-l flex items-center overflow-hidden">
          <div className="w-[32px] h-full border-r border-[#ddd] flex items-center justify-center">
            <svg viewBox="0 0 16 16" className="w-4 h-4"><path d="M14 8H2M7 3L2 8l5 5" fill="none" stroke="#a6d8b8" strokeWidth="2" /></svg>
          </div>
          <div className="w-[30px] h-full border-r border-[#ddd] flex items-center justify-center">
            <svg viewBox="0 0 16 16" className="w-[15px] h-[15px]"><path d="M13 8a5.500 5.500 0 1 1-2-4.300M11 1v3.500H7.500" fill="none" stroke="#666" strokeWidth="1.800" /></svg>
          </div>
          <div className="w-[31px] h-full border-r border-[#ddd] flex items-center justify-center">
            <svg viewBox="0 0 16 16" className="w-4 h-4"><path d="M1.500 8L8 2l6.500 6M4 8v6h8V8" fill="none" stroke="#555" strokeWidth="1.500" /></svg>
          </div>
          <Ico name="globe" cls="w-[16px] h-[16px] ml-[11px]" />
          <div className="ml-[4px] w-[297px] overflow-hidden font-['Liberation_Mono',monospace] text-[13.33px] text-[#9a9a9a] relative top-px">http://e.<span className="text-[#222]">fwxgx.com</span>/question_1878518.h</div>
          <svg viewBox="0 0 16 16" className="w-[14px] h-[14px] ml-[6px]"><circle cx="8" cy="8" r="5.500" fill="none" stroke="#36a574" strokeWidth="4" strokeDasharray="3 1" /></svg>
          <svg viewBox="0 0 12 16" className="w-[12px] h-[15px] ml-[7px]"><path d="M8 0L1 9h4l-2 7 8-10H6z" fill="#3cc04e" /></svg>
          <div className="w-px h-full bg-[#ddd] ml-[7px]" />
          <svg viewBox="0 0 12 8" className="w-[12px] h-[8px] ml-[8px]"><path d="M1 1l5 5 5-5" fill="none" stroke="#555" strokeWidth="1.800" /></svg>
          <div className="w-px h-full bg-[#ddd] ml-[6px]" />
          <span className="ml-[8px] text-sm text-[#aaa]">点此搜索</span>
        </div>

        <div className="h-[39px] shrink-0 flex items-center text-[#444]">
          <span className="-ml-[5px]">收藏</span>
          <Caret cls="ml-[8px] opacity-50" />
          <div className="flex items-center ml-[10px] gap-[3px]"><Ball /><span>网址大全</span></div>
          <div className="flex items-center ml-[10px] gap-[3px]">
            <svg viewBox="0 0 12 16" className="w-[12px] h-[15px]"><path d="M1 1h7l3 3v11H1z" fill="#fff" stroke="#999" /></svg>
            <span>交通违法</span>
          </div>
          <div className="flex items-center ml-[15px] gap-[2px]">
            <svg viewBox="0 0 16 16" className="w-4 h-4"><path d="M1 8l7-7 7 7M3 8v6h10V8" fill="none" stroke="#5a9d3c" strokeWidth="1.500" /><rect x="2" y="10" width="12" height="5" fill="#e8a33c" /></svg>
            <span>软件-2345</span>
          </div>
          <div className="flex items-center ml-[10px] gap-[2px]">
            <svg viewBox="0 0 16 16" className="w-4 h-4"><path d="M3 9a5 5 0 0 1 10 0z" fill="#f5a93c" /><path d="M1 14c0-4 4-5 7-4s7 0 7 4z" fill="#eef2f6" stroke="#c9d3de" /></svg>
            <span>佛山天气</span>
          </div>
          <div className="flex items-center ml-[15px] gap-[2px]">
            <svg viewBox="0 0 16 16" className="w-4 h-4"><ellipse cx="8" cy="11" rx="5" ry="4.500" fill="#2c6fe0" /><circle cx="3" cy="6" r="1.800" fill="#2c6fe0" /><circle cx="13" cy="6" r="1.800" fill="#2c6fe0" /><circle cx="6" cy="3" r="1.800" fill="#2c6fe0" /><circle cx="10" cy="3" r="1.800" fill="#2c6fe0" /></svg>
            <span>百度文库</span>
          </div>
          <svg viewBox="0 0 10 10" className="w-[10px] h-[10px] ml-[8px]"><path d="M0 0l4 5-4 5M5 0l4 5-4 5" fill="none" stroke="#888" /></svg>
          <Grip cls="ml-[67px] opacity-60" />
          <svg viewBox="0 0 16 16" className="w-[15px] h-[15px] ml-[9px]"><rect x="0" y="0" width="7" height="7" fill="#57b4f2" /><rect x="0" y="9" width="7" height="7" fill="#37c47c" /><rect x="9" y="9" width="7" height="7" fill="#f0846c" /><path d="M12.500 0v7M9 3.500h7" stroke="#f4c400" strokeWidth="2.500" /></svg>
          <Caret cls="ml-[9px] opacity-60" />
          <svg viewBox="0 0 16 16" className="w-[15px] h-[15px] ml-[9px]"><path d="M1 2h6l1 1 1-1h6v12H1zM8 3v11" fill="#e8f8ee" stroke="#22b860" strokeWidth="1.500" /></svg>
          <div className="w-[16px] h-[16px] ml-[6px] bg-[#fbd9d3] border border-[#e9a89c] text-[#c85a4a] text-[9px] leading-[14px] text-center">Aa</div>
          <Caret cls="ml-[9px] opacity-60" />
          <svg viewBox="0 0 16 16" className="w-[17px] h-[17px] ml-[8px]"><rect x=".5" y=".5" width="15" height="15" fill="#fbecc8" stroke="#e8b860" strokeDasharray="2 1" /><path d="M4 8h8v6H4zM6 3v5M10 3v5" stroke="#c87a20" fill="none" /></svg>
          <Caret cls="ml-[9px] opacity-60" />
        </div>

        {/* tabs */}
        <div className="h-[28px] shrink-0 flex items-end border-b border-[#b8b8b8] pl-[13px] text-[#444]">
          <div className="w-[222px] h-[27px] border border-b-0 border-[#c8c8c8] rounded-t flex items-center pl-[4px] shrink-0">
            <Ball />
            <span className="ml-[5px] w-[172px]">360导航_新一代安全上网导航</span>
            <span className="text-[#aaa] text-sm leading-none">✕</span>
          </div>
          <div className="w-[224px] h-[28px] ml-[2px] -mb-px bg-white border border-b-0 border-[#b8b8b8] rounded-t flex items-center pl-[6px] shrink-0 text-[#222]">
            <svg viewBox="0 0 16 16" className="w-4 h-4 shrink-0"><path d="M2 8a6 6 0 0 1 11-3" fill="none" stroke="#2b8ae0" strokeWidth="2.500" /><path d="M14 8a6 6 0 0 1-11 3" fill="none" stroke="#f0a030" strokeWidth="2.500" /></svg>
            <span className="ml-[3px] w-[174px] overflow-hidden">老师我想问一下，有集水坑的状态</span>
            <span className="ml-[5px] text-[#aaa] text-sm leading-none">✕</span>
          </div>
          <div className="w-[25px] h-[27px] border-r border-[#c8c8c8] text-center text-[#666] text-lg leading-[25px] shrink-0">+</div>
          <svg viewBox="0 0 16 16" className="w-4 h-4 ml-[127px] mb-[5px]"><path d="M1 1h11v3M1 1v11h3M4 4h11v11H4z" fill="none" stroke="#777" strokeWidth="1.500" /></svg>
          <svg viewBox="0 0 16 16" className="w-4 h-4 ml-[9px] mb-[5px]"><path d="M2 5h8a4 4 0 0 1 0 9H6M5 2L2 5l3 3" fill="none" stroke="#777" strokeWidth="1.500" /></svg>
        </div>

        {/* page */}
        <div className="flex-1 min-h-0 flex bg-white">
          <div className="w-[6px] shrink-0 bg-[#f3f3f3] border-r border-[#ddd]" />
          <div className="flex-1 min-w-0 flex flex-col">
            <div className="h-[48px] shrink-0" />
            <div className="h-[64px] shrink-0 bg-[#fafafa] border-y border-[#e6e6e6] flex items-center pl-[16px] overflow-hidden">
              <div className="w-[30px] h-[31px] rounded-[2px] bg-[#fdc40f] text-white text-[26px] leading-[31px] text-center font-light shrink-0 font-['Liberation_Sans',sans-serif]">?</div>
              <p className="ml-[16px] pt-[3px] w-[564px] whitespace-normal text-[18px] leading-[21px] text-[#555]">老师我想问一下，有集水坑的状态下，是先设置变截面呢？还是先设置集水坑？</p>
            </div>
            <div className="h-[57px] shrink-0 pl-[46px] pt-[20px] text-sm leading-5 tracking-[0.3px] text-[#4a80b5]">浏览5 次 | 0 回答 | 0 答得好 | 0问得好</div>
            <div className="flex items-center h-[322px] shrink-0 pl-[46px]">
              <span className="w-[32px] text-base text-[#555] shrink-0">谢谢</span>
              <div className="relative shrink-0">
                <Section />
                <div className="absolute top-[2px] left-[528px] w-[42px] h-[14px] bg-[#dfe9fb] flex rounded-l-sm overflow-hidden">
                  <div className="w-[18px] bg-[#3b7fe8] flex items-center justify-center">
                    <svg viewBox="0 0 12 12" className="w-[11px] h-[11px]"><circle cx="6" cy="3.500" r="2.500" fill="none" stroke="#fff" strokeWidth="1.400" /><circle cx="3.500" cy="8" r="2.500" fill="none" stroke="#fff" strokeWidth="1.400" /><circle cx="8.500" cy="8" r="2.500" fill="none" stroke="#fff" strokeWidth="1.400" /></svg>
                  </div>
                  <span className="ml-[6px] text-[8px] leading-[14px] text-[#9ab3d8]">拍照</span>
                </div>
              </div>
            </div>
            <div className="mt-[3px] ml-[46px] shrink-0"><Plan /></div>
          </div>
        </div>

        {/* floating side buttons */}
        <div className="absolute left-[607px] top-[508px] flex flex-col">
          <div className="w-10 h-10 bg-[#c4c4c4] flex items-center justify-center">
            <svg viewBox="0 0 20 16" className="w-[20px] h-[16px]"><path d="M0 1h20M2 14l8-8 8 8" fill="none" stroke="#fff" strokeWidth="2" /></svg>
          </div>
          <Orange a="意见" b="反馈" cls="mt-[10px]" />
          <Orange a="关注" b="我们" cls="mt-[10px]" />
          <Orange a="Q Q" b="咨询" cls="mt-[10px]" />
        </div>
      </div>

      {/* red annotation arrows drawn over the screenshot */}
      <svg viewBox="0 0 1550 762" className="absolute inset-0 w-[1550px] h-[762px] pointer-events-none" fill="#ec1018" stroke="none">
        <path d="M1350 207.500L820 187" stroke="#ec1018" strokeWidth="3" fill="none" />
        <polygon points="805,187 826,180 826,195" />
        <path d="M1102 194L1472 191" stroke="#ec1018" strokeWidth="3" fill="none" />
        <polygon points="1490,191 1470,184 1470,199" />
        <path d="M806 278L781 196" stroke="#ec1018" strokeWidth="3" fill="none" />
        <polygon points="776,180 770,199 787,194" />
        <path d="M803 282L700 431" stroke="#ec1018" strokeWidth="3" fill="none" />
        <polygon points="691,445 692,424 707,435" />
      </svg>
    </div>
  );
}
